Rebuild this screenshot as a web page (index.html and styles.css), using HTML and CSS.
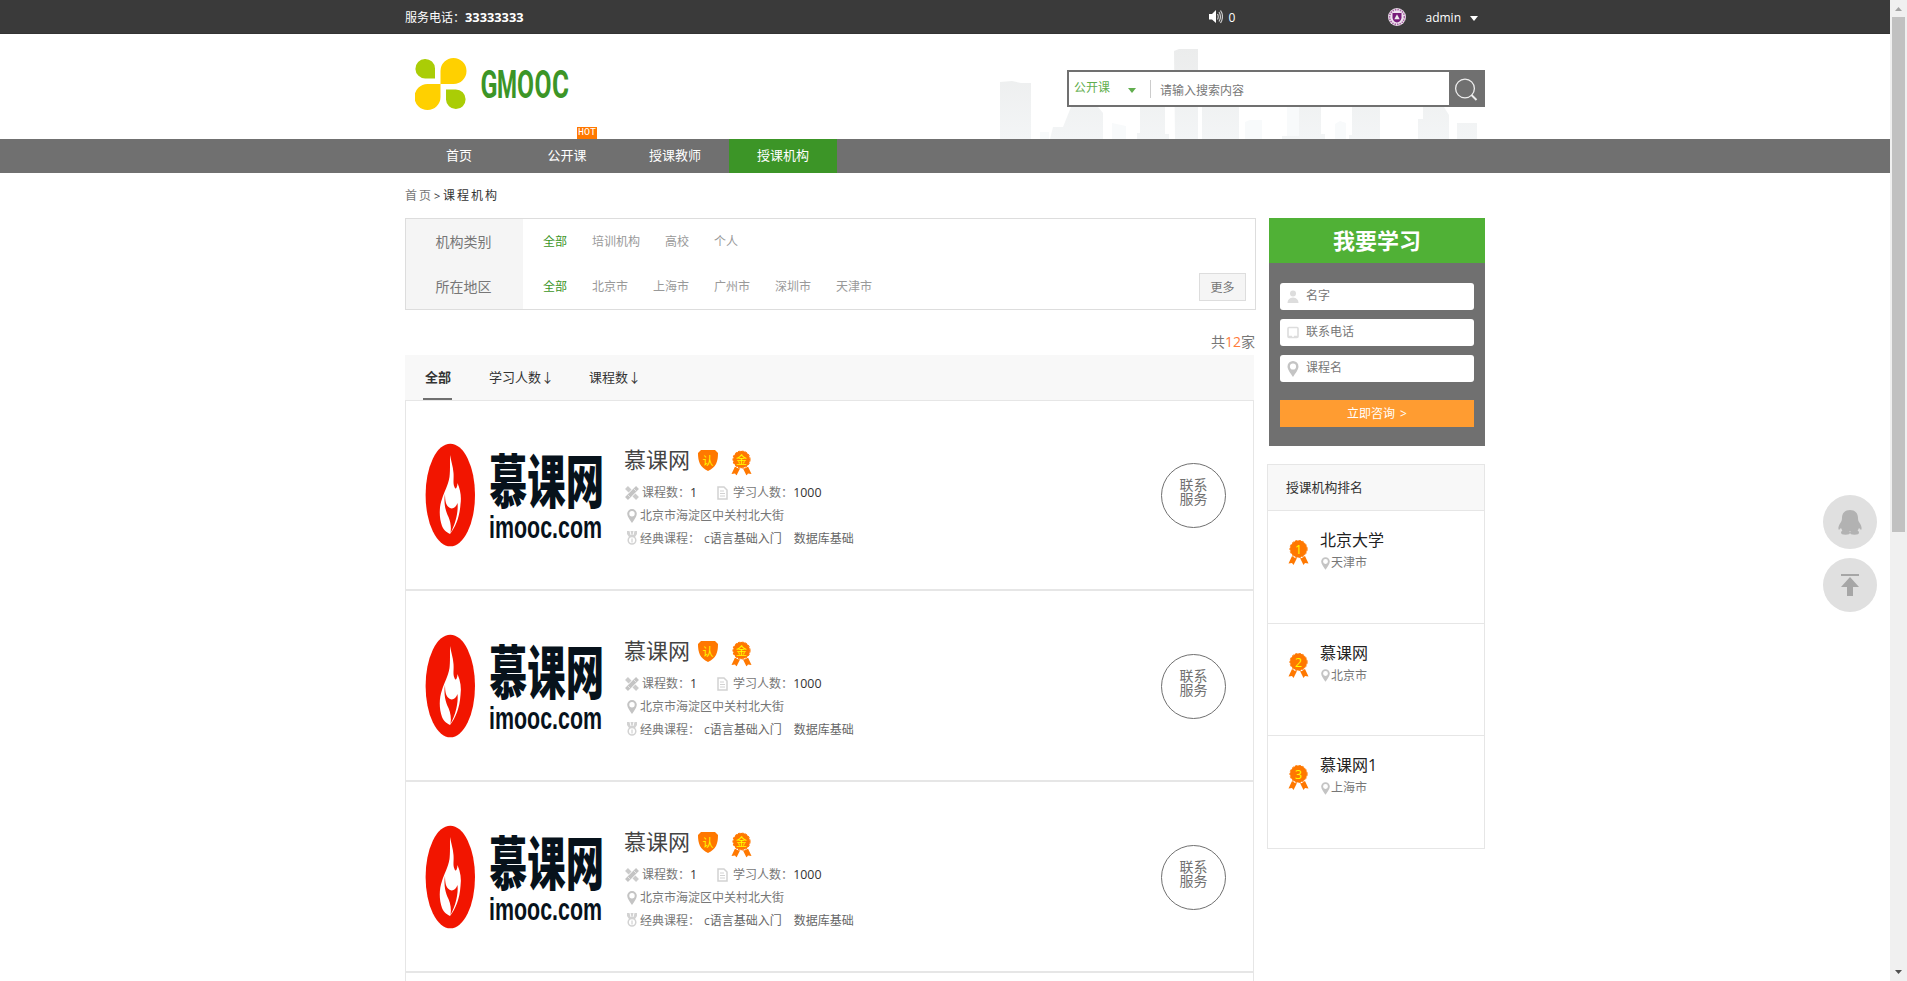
FILE: index.html
```html
<!DOCTYPE html>
<html lang="zh-CN">
<head>
<meta charset="utf-8">
<title>课程机构</title>
<link rel="stylesheet" href="styles.css">
</head>
<body>
<svg class="defs" width="0" height="0">
  <defs>
    <symbol id="pin" viewBox="0 0 10 14"><path fill="#c4c4c4" fill-rule="evenodd" d="M5 0a4.8 4.8 0 0 1 4.8 4.8C9.800 7.500 7 11 5 14 3 11 .2 7.500 .2 4.800A4.800 4.800 0 0 1 5 0zm0 2.100a2.700 2.700 0 1 0 0 5.400 2.700 2.700 0 0 0 0-5.400z"/></symbol>
    <symbol id="tools" viewBox="0 0 14 14"><path stroke="#ccc" stroke-width="4" d="M1.500 1.500l11 11"/><path stroke="#fff" stroke-width="5.500" d="M10 4L4 10"/><path stroke="#c4c4c4" stroke-width="4" d="M12.500 1.500l-11 11"/><path stroke="#fff" stroke-width=".6" d="M3 9l2 2M9 3l2 2"/></symbol>
    <symbol id="doc" viewBox="0 0 11 14"><path fill="#fff" stroke="#d2d2d2" stroke-width="1.500" d="M1 1h6l3 3v9H1z"/><path stroke="#d2d2d2" d="M3 5h4M3 7.500h5M3 10h5"/></symbol>
    <symbol id="medal" viewBox="0 0 10 14"><path fill="#d2d2d2" d="M0 0h10v3L8 6H2L0 3z"/><path stroke="#fff" d="M3 0l1 4M7 0l-1 4"/><circle cx="5" cy="9.300" r="3.800" fill="#fff" stroke="#d2d2d2" stroke-width="1.500"/><path stroke="#c8c8c8" d="M5 7.500v4"/></symbol>
    <symbol id="ribbon" viewBox="0 0 21 25"><path fill="#ff7800" d="M4.500 15L.5 23.500l3.500-.5 1.500 2L9.500 17zM16.500 15l4 8.500-3.500-.5-1.500 2-4-8z"/><circle cx="10.500" cy="9" r="9.600" fill="#fff"/><circle cx="10.500" cy="9" r="8.500" fill="#ff7800"/><circle cx="10.500" cy="9" r="8.600" fill="none" stroke="#ff7800" stroke-width="1" stroke-dasharray="2.200 1.480"/></symbol>
    <symbol id="org" viewBox="0 0 180 104">
      <ellipse cx="25.300" cy="52" rx="24.700" ry="51.300" fill="#f21500"/>
      <path fill="#fff" d="M25 12c1 6 3 11 3.500 18 .5 6-.8 10 1 14 1.500 4 3-1 3-4 3 7 4 14 3 21-.8 13-5 23-10.500 30-2-1-6-3-8-8-3-8-3-19 0-27 2-7 6-13 7.500-22 .7-5 .5-15 .5-22z"/>
      <path fill="#f21500" d="M20 51c0 7 1 12 5 14 3 1.500 6-1 7.500-5 1 9-2 21-7 30 1-6 0-11-2-16-3-6-5-14-3.500-23z"/>
      <text class="org-cn" x="64" y="59.500" textLength="115" lengthAdjust="spacingAndGlyphs">慕课网</text>
      <text class="org-en" x="64" y="94.500" textLength="113" lengthAdjust="spacingAndGlyphs">imooc.com</text>
    </symbol>
  </defs>
</svg>

<div class="window">
<div class="page">
  <div class="topbar">
    <div class="wrap">
      <span>服务电话：<b>33333333</b></span>
      <div class="user">
        <svg class="speaker" width="14" height="14" viewBox="0 0 14 14"><path fill="#fff" d="M0 4h3l4-4v13L3 9.500H0z"/><path fill="none" stroke="#ccc" stroke-width="1.200" d="M8.500 4q1.500 2.700 0 5.500M10 2q3 4.700 0 9.500M11.500.5q4 6 0 12.500"/></svg>
        <span class="msg">0</span>
        <svg class="avatar" width="18" height="18" viewBox="0 0 18 18"><circle cx="9" cy="9" r="9" fill="#eee3ee"/><circle cx="9" cy="9" r="7.400" fill="none" stroke="#a765a5" stroke-width="1.600" stroke-dasharray="1.500 1"/><path fill="#771c79" d="M4.500 5h9v5q-1 4-4.500 4.500Q5.500 14 4.500 10z"/><path fill="#eee" d="M9 6.200l2.700 5H6.300z"/></svg>
        <span class="name">admin</span>
        <i class="caret"></i>
      </div>
    </div>
  </div>

  <div class="header">
    <div class="wrap">
      <svg class="logo" width="170" height="60" viewBox="0 0 170 60">
        <path fill="#aacd06" d="M20 20.500H10.500a9.800 9.800 0 1 1 9.500-10zM31 31.500h9.800a9.800 9.800 0 1 1-9.800 10z"/>
        <path fill="#ffd000" d="M25.500 26V13a13 13 0 1 1 13 13zM25.500 26v13a13 13 0 1 1-13-13z"/>
        <g class="logo-text">
          <text x="65.500" y="40" textLength="17" lengthAdjust="spacingAndGlyphs">G</text>
          <text x="82" y="40" textLength="20" lengthAdjust="spacingAndGlyphs">M</text>
          <text x="102" y="40" textLength="17" lengthAdjust="spacingAndGlyphs">O</text>
          <text x="119.500" y="40" textLength="17" lengthAdjust="spacingAndGlyphs">O</text>
          <text x="137" y="40" textLength="17" lengthAdjust="spacingAndGlyphs">C</text>
        </g>
      </svg>
      <div class="city">
        <svg width="485" height="91" viewBox="0 0 485 91">
          <defs><linearGradient id="g" x1="0" y1="0" x2="0" y2="91" gradientUnits="userSpaceOnUse"><stop offset="0" stop-color="#ebecec"/><stop offset="1" stop-color="#f3f5f6"/></linearGradient></defs>
          <path fill="#f8fafb" d="M40 84h9v7h-9zM112 75l14 3v13h-14zM245 74l5-2h12v19h-17zM287 59h12v32h-12zM335 76l5-3 6 2v16h-11z"/>
          <path fill="url(#g)" d="M0 34l12-1 9 2h10v56H0zM50 91l3-12h10l8-20h27l5 6v26zM137 91v-6h3V59h25v27h4v5zM174 3l5-2h19v90h-23zM202 59h37v32h-37zM282 91v-3h17V59h22v27h4v5zM349 87h3V59h28v32h-31zM418 91V71h5V59h21l5 8v24zM457 75h20v16h-20z"/>
        </svg>
        <div class="search">
          <div class="kind">公开课<i class="caret green"></i></div>
          <div class="query">请输入搜索内容</div>
          <div class="go"><svg width="24" height="24" viewBox="0 0 24 24" fill="none" stroke="#eee" stroke-width="1.300"><circle cx="11" cy="10.500" r="9.400"/><path d="M17.500 17l5 5" stroke-width="2"/></svg></div>
        </div>
      </div>
    </div>
  </div>

  <div class="nav">
    <div class="wrap">
      <a>首页</a>
      <a>公开课<span class="hot">HOT</span></a>
      <a>授课教师</a>
      <a class="on">授课机构</a>
    </div>
  </div>

  <div class="wrap crumbs"><span>首页</span><em>&gt;</em>课程机构</div>

  <div class="wrap body">
    <div class="main">
      <div class="filter">
        <div class="labels"><div>机构类别</div><div>所在地区</div></div>
        <div class="options">
          <div><a class="on">全部</a><a>培训机构</a><a>高校</a><a>个人</a></div>
          <div><a class="on">全部</a><a>北京市</a><a>上海市</a><a>广州市</a><a>深圳市</a><a>天津市</a></div>
        </div>
        <div class="more">更多</div>
      </div>
      <div class="count">共<b>12</b>家</div>
      <div class="tabs"><a class="on">全部</a><a>学习人数↓</a><a>课程数↓</a></div>

      <div class="card first">
        <svg class="pic" width="180" height="104"><use href="#org"/></svg>
        <div class="info">
          <div class="title">慕课网
            <svg class="cert" width="20" height="21" viewBox="0 0 20 21"><path fill="#ff7800" d="M3 0h14l3 3c0 9-2 14-10 18C2 17 0 12 0 3z"/><text class="badge" x="10" y="14.500">认</text></svg>
            <svg class="gold" width="21" height="26" viewBox="0 0 21 25"><use href="#ribbon"/><text class="badge" x="10.500" y="13.500">金</text></svg>
          </div>
          <div class="row r1"><svg width="14" height="14"><use href="#tools"/></svg><span>课程数：</span><b>1</b><svg class="doc" width="11" height="14"><use href="#doc"/></svg><span>学习人数：</span><b>1000</b></div>
          <div class="row r2"><svg width="10" height="14"><use href="#pin"/></svg>北京市海淀区中关村北大街</div>
          <div class="row r3"><svg width="10" height="14"><use href="#medal"/></svg>经典课程：<i>c语言基础入门</i><i>数据库基础</i></div>
        </div>
        <div class="contact">联系<br>服务</div>
      </div>

      <div class="card">
        <svg class="pic" width="180" height="104"><use href="#org"/></svg>
        <div class="info">
          <div class="title">慕课网
            <svg class="cert" width="20" height="21" viewBox="0 0 20 21"><path fill="#ff7800" d="M3 0h14l3 3c0 9-2 14-10 18C2 17 0 12 0 3z"/><text class="badge" x="10" y="14.500">认</text></svg>
            <svg class="gold" width="21" height="26" viewBox="0 0 21 25"><use href="#ribbon"/><text class="badge" x="10.500" y="13.500">金</text></svg>
          </div>
          <div class="row r1"><svg width="14" height="14"><use href="#tools"/></svg><span>课程数：</span><b>1</b><svg class="doc" width="11" height="14"><use href="#doc"/></svg><span>学习人数：</span><b>1000</b></div>
          <div class="row r2"><svg width="10" height="14"><use href="#pin"/></svg>北京市海淀区中关村北大街</div>
          <div class="row r3"><svg width="10" height="14"><use href="#medal"/></svg>经典课程：<i>c语言基础入门</i><i>数据库基础</i></div>
        </div>
        <div class="contact">联系<br>服务</div>
      </div>

      <div class="card">
        <svg class="pic" width="180" height="104"><use href="#org"/></svg>
        <div class="info">
          <div class="title">慕课网
            <svg class="cert" width="20" height="21" viewBox="0 0 20 21"><path fill="#ff7800" d="M3 0h14l3 3c0 9-2 14-10 18C2 17 0 12 0 3z"/><text class="badge" x="10" y="14.500">认</text></svg>
            <svg class="gold" width="21" height="26" viewBox="0 0 21 25"><use href="#ribbon"/><text class="badge" x="10.500" y="13.500">金</text></svg>
          </div>
          <div class="row r1"><svg width="14" height="14"><use href="#tools"/></svg><span>课程数：</span><b>1</b><svg class="doc" width="11" height="14"><use href="#doc"/></svg><span>学习人数：</span><b>1000</b></div>
          <div class="row r2"><svg width="10" height="14"><use href="#pin"/></svg>北京市海淀区中关村北大街</div>
          <div class="row r3"><svg width="10" height="14"><use href="#medal"/></svg>经典课程：<i>c语言基础入门</i><i>数据库基础</i></div>
        </div>
        <div class="contact">联系<br>服务</div>
      </div>
      <div class="card"></div>
    </div>

    <div class="side">
      <div class="form">
        <h2>我要学习</h2>
        <div class="field"><svg width="12" height="14" viewBox="0 0 12 14"><circle cx="6" cy="3.500" r="3" fill="#ddd"/><path fill="#ddd" d="M.5 13Q.5 8 6 7.500 11.500 8 11.500 13z"/></svg><span>名字</span></div>
        <div class="field"><svg width="12" height="14" viewBox="0 0 12 14"><rect x="1" y="1.500" width="10" height="10" rx="1" fill="#fff" stroke="#ddd" stroke-width="1.600"/><path stroke="#ddd" stroke-width="1.500" d="M1 10.500h4M7 10.500h4"/></svg><span>联系电话</span></div>
        <div class="field"><svg width="12" height="16"><use href="#pin"/></svg><span>课程名</span></div>
        <div class="ask">立即咨询 &gt;</div>
      </div>
      <div class="rank">
        <h3>授课机构排名</h3>
        <div class="item"><svg width="21" height="25" viewBox="0 0 21 25"><use href="#ribbon"/><text class="badge num" x="10.500" y="13.500">1</text></svg><div><p>北京大学</p><small><svg width="9" height="13"><use href="#pin"/></svg>天津市</small></div></div>
        <div class="item"><svg width="21" height="25" viewBox="0 0 21 25"><use href="#ribbon"/><text class="badge num" x="10.500" y="13.500">2</text></svg><div><p>慕课网</p><small><svg width="9" height="13"><use href="#pin"/></svg>北京市</small></div></div>
        <div class="item last"><svg width="21" height="25" viewBox="0 0 21 25"><use href="#ribbon"/><text class="badge num" x="10.500" y="13.500">3</text></svg><div><p>慕课网1</p><small><svg width="9" height="13"><use href="#pin"/></svg>上海市</small></div></div>
      </div>
    </div>
  </div>
</div>

<div class="scroll">
  <svg width="17" height="17" viewBox="0 0 17 17"><path fill="#a3a3a3" d="M5 11l3.500-4 3.500 4z"/></svg>
  <div class="thumb"></div>
  <svg class="down" width="17" height="17" viewBox="0 0 17 17"><path fill="#505050" d="M5 6l3.500 4L12 6z"/></svg>
</div>
</div>

<div class="float">
  <div><svg width="24" height="25" viewBox="0 0 24 25" fill="#b2b2b2"><path d="M12 0c5 0 8 3 8 8 0 2 .5 3 1 4 2 3 3 5 2.500 7.500-1 .5-1.500-.5-2.500-1.500L19.500 21H4.500L3 18c-1 1-1.500 2-2.500 1.500C0 17 1 15 3 12c.5-1 1-2 1-4 0-5 3-8 8-8z"/><ellipse cx="7.500" cy="22.500" rx="4.500" ry="2.200"/><ellipse cx="16.500" cy="22.500" rx="4.500" ry="2.200"/></svg></div>
  <div><svg width="18" height="22" viewBox="0 0 18 22" fill="#a6a6a6"><path d="M0 0h18v2H0zM9 3l9 10h-6v9H6v-9H0z"/></svg></div>
</div>
</body>
</html>
```
FILE: styles.css
```css
* { box-sizing: border-box; margin: 0; padding: 0; }
html, body { height: 981px; overflow: hidden; }
body { background: #fff; color: #333; font: 12px "Open Sans", "Noto Sans CJK SC", sans-serif; }
.defs { display: block; position: absolute; }
svg { display: block; flex: none; }
i, em { font-style: normal; }
.window { display: flex; height: 981px; }
.page { width: 1890px; height: 981px; overflow: hidden; }
.wrap { width: 1080px; margin: 0 auto; display: flex; }

.topbar { height: 34px; background: #3a3a3a; border-bottom: 1px solid #333; color: #fff; line-height: 35px; }
.topbar .wrap { height: 33px; justify-content: space-between; }
.topbar b { font-size: 12.800px; }
.user { display: flex; align-items: center; padding-right: 7px; height: 34px; }
.msg { width: 166px; padding-left: 5px; }
.avatar { margin-left: -1px; }
.name { margin: 0 9px 0 19px; }
.caret { border: 4px solid transparent; border-top: 5px solid #fff; border-bottom: 0; margin-top: 2px; }

.header { height: 105px; }
.header .wrap { justify-content: space-between; }
.logo { margin: 24px 0 0 10px; }
.logo-text { font: bold 39px Roboto, sans-serif; fill: #3c9527; }
.city { display: grid; width: 485px; margin-top: 14px; }
.city > * { grid-area: 1 / 1; }
.search { width: 418px; height: 37px; margin: 22px 0 0 67px; display: flex; align-items: center; background: #fff; border: 2px solid #707070; }
.kind { width: 82px; height: 18px; line-height: 14px; border-right: 1px solid #ccc; color: #61ae4e; padding: 0 14px 2px 5px; display: flex; justify-content: space-between; align-items: center; }
.green { border-top-color: #61ae4e; margin-top: 5px; }
.query { flex: 1; padding: 3px 0 0 9px; color: #777; }
.go { width: 34px; height: 33px; background: #707070; padding: 6px 0 0 5px; }

.nav { height: 34px; background: #707070; }
.nav a { position: relative; width: 108px; height: 34px; line-height: 33px; text-align: center; color: #fff; font-size: 13px; }
.nav .on { background: #3c9527; }
.hot { position: absolute; left: 64px; top: -12px; width: 20px; height: 12px; background: #ff7800; font: 10px/12px "Liberation Mono", monospace; }
.crumbs { height: 45px; line-height: 46px; letter-spacing: 2px; }
.crumbs span { color: #777; }
.crumbs em { width: 10px; padding-left: 1px; font-size: 11px; }

.body { justify-content: space-between; }
.main { width: 851px; }
.filter { height: 92px; border: 1px solid #ddd; display: flex; }
.labels { width: 117px; padding-right: 2px; background: #f5f5f5; color: #777; font-size: 14px; text-align: center; line-height: 45px; }
.labels > div, .options > div { height: 45px; }
.options { flex: 1; padding-left: 20px; line-height: 46px; }
.options > div { display: flex; gap: 25px; color: #999; }
.options .on { color: #3c9527; }
.more { align-self: flex-end; width: 47px; height: 28px; margin: 0 9px 8px 0; border: 1px solid #ddd; background: #f5f5f5; color: #777; text-align: center; line-height: 27px; }
.count { height: 45px; padding: 22px 1px 0 0; line-height: 20px; font-size: 14px; color: #777; text-align: right; }
.count b { font-weight: normal; color: #ff7b3a; }
.tabs { width: 849px; height: 45px; background: #f8f8f8; display: flex; padding-left: 18px; font: 13px/43px "Noto Sans CJK SC", sans-serif; white-space: nowrap; }
.tabs a { padding: 0 2px; margin-right: 31px; }
.tabs .on { width: 29px; margin-right: 35px; font-weight: bold; border-bottom: 2px solid #707070; }

.card { width: 849px; height: 191px; border: 1px solid #e6e6e6; display: flex; padding: 43px 27px 0 19px; }
.first { height: 190px; padding-top: 42px; }
.org-cn { font: 900 58px "Noto Sans CJK SC", sans-serif; fill: #07121b; }
.org-en { font: bold 31px "Liberation Sans Narrow", "Liberation Sans", sans-serif; fill: #07121b; }
.info { width: 400px; margin: 2px auto 0 19px; color: #777; }
.title { height: 30px; line-height: 28px; font-size: 22px; color: #444; display: flex; align-items: flex-start; }
.cert { margin: 5px 13px 0 8px; }
.gold { margin-top: 5px; }
.badge { font: 11px "Open Sans", "Noto Sans CJK SC", sans-serif; fill: #ff0; text-anchor: middle; }
.num { font-size: 12.500px; }
.row { display: flex; align-items: center; height: 23px; line-height: 23px; }
.row b { color: #333; font-weight: normal; font-size: 12.400px; }
.r1 { margin-top: 6px; padding-left: 1px; }
.r1 svg { margin-right: 3px; }
.r1 .doc { margin: 0 5px 0 20px; }
.r2 svg, .r3 svg { margin: 0 3px 0 3px; }
.r3 { height: 22px; }
.r3 i { margin-left: 4px; color: #666; }
.r3 i + i { margin-left: 12px; }
.contact { width: 65px; height: 65px; margin-top: 20px; border: 1px solid #707070; border-radius: 50%; text-align: center; font-size: 14px; line-height: 14px; padding-top: 14px; color: #707070; }

.side { width: 218px; }
.form { width: 216px; height: 228px; margin-left: 2px; background: #707070; padding: 0 11px; }
.form h2 { height: 45px; margin: 0 -11px 20px; background: #50b136; color: #fff; font-size: 22px; line-height: 44px; text-align: center; }
.field { height: 27px; margin-bottom: 9px; padding-left: 7px; background: #fff; border-radius: 3px; color: #777; display: flex; align-items: center; gap: 7px; }
.field span { line-height: 25px; height: 27px; }
.ask { height: 27px; margin-top: 18px; background: #ff9c31; color: #fff; line-height: 27px; text-align: center; word-spacing: 2px; }
.rank { margin-top: 18px; border: 1px solid #e6e6e6; }
.rank h3 { height: 46px; background: #f8f8f8; border-bottom: 1px solid #e6e6e6; font-weight: normal; font-size: 12.800px; line-height: 44px; padding-left: 18px; }
.item { height: 112.500px; border-bottom: 1px solid #e6e6e6; padding: 18px 0 0 20px; display: flex; gap: 11px; }
.item > svg { margin-top: 11px; }
.item.last { height: 111.500px; border-bottom: 0; }
.item p { height: 24px; font-size: 16px; line-height: 22px; color: #222; }
.item small { display: flex; align-items: center; gap: 1px; font-size: 12px; line-height: 20px; color: #777; padding-left: 1px; }

.scroll { width: 17px; background: #f0f0f0; display: flex; flex-direction: column; }
.thumb { width: 13px; height: 515px; margin-left: 2px; background: #c1c1c1; }
.down { margin-top: auto; }
.float { position: fixed; left: 1823px; top: 495px; display: grid; gap: 9px; }
.float div { width: 54px; height: 54px; border-radius: 50%; background: #e0e0e0; display: flex; align-items: center; justify-content: center; }
```
